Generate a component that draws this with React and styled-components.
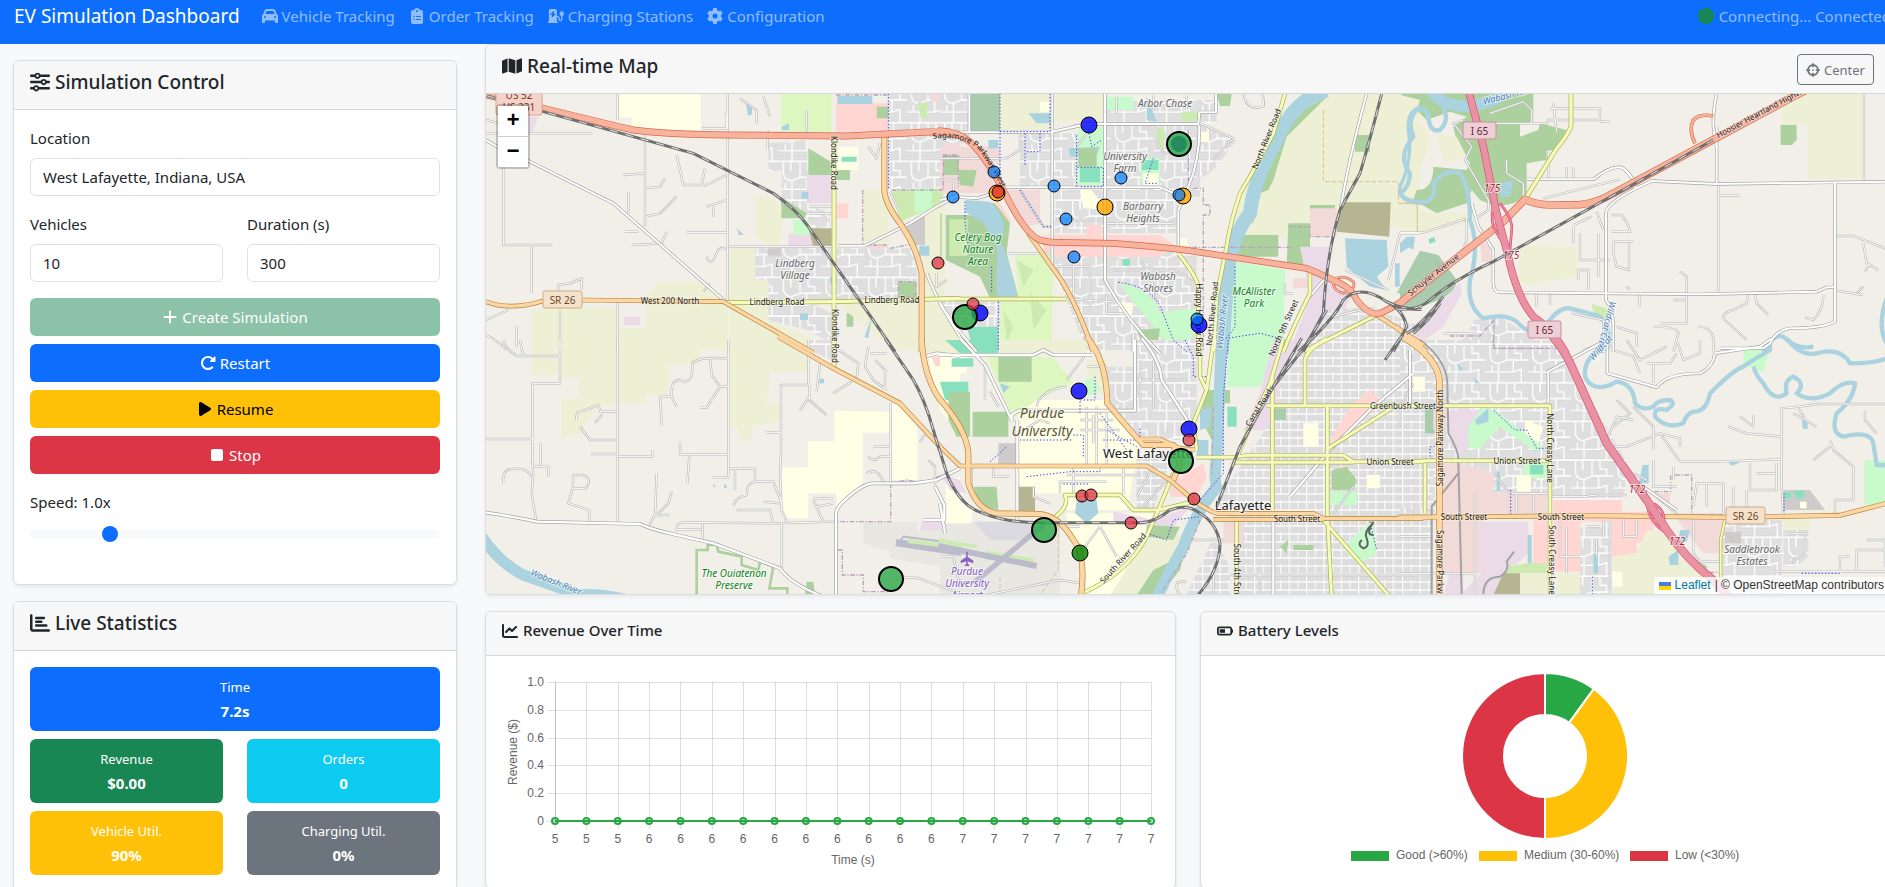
import React, { useState } from "react";
import styled, { createGlobalStyle, css } from "styled-components";
import {
  FaCar, FaClipboardList, FaChargingStation, FaGear, FaSliders, FaPlus, FaRotateRight,
  FaPlay, FaStop, FaChartBar, FaMap, FaCrosshairs, FaChartLine, FaBatteryHalf,
} from "react-icons/fa6";

const GlobalStyle = createGlobalStyle`
  *, *::before, *::after { box-sizing: border-box; }
  body {
    margin: 0;
    background: #f8f9fa;
    color: #212529;
    font-family: "Segoe UI", "Noto Sans", "Open Sans", sans-serif;
    font-size: 15px;
    line-height: 24px;
  }
`;

const Viewport = styled.div`
  height: 100vh;
  overflow: hidden;
`;

const Page = styled.div`
  width: calc(100% + 18px);
`;

const Navbar = styled.header`
  display: flex;
  align-items: flex-start;
  height: 44px;
  padding: 4px 12px 0 14px;
  background: #0d6efd;
  color: rgba(255, 255, 255, 0.55);
`;

const Brand = styled.a`
  margin-right: 22px;
  color: #fff;
  font-size: 19px;
  text-decoration: none;
`;

const Nav = styled.nav`
  display: flex;
  gap: 14px;
`;

const NavLink = styled.a`
  display: flex;
  align-items: center;
  gap: 4px;
  color: inherit;
  text-decoration: none;
  svg { font-size: 16px; }
`;

const Status = styled.div`
  display: flex;
  align-items: center;
  gap: 5px;
  margin-left: auto;
`;

const StatusDot = styled.span`
  width: 16px;
  height: 16px;
  border-radius: 50%;
  background: #198754;
`;

const Main = styled.main`
  display: grid;
  grid-template-columns: minmax(0, 24fr) minmax(0, 76fr);
  gap: 28px;
  padding: 0 12px 0 13px;
`;

const Sidebar = styled.div`
  display: flex;
  flex-direction: column;
  gap: 16px;
  padding-top: 16px;
`;

const Content = styled.div`
  display: flex;
  flex-direction: column;
  gap: 16px;
`;

const Card = styled.section`
  overflow: hidden;
  border: 1px solid #dcdddf;
  border-radius: 6px;
  background: #fff;
  box-shadow: 0 2px 4px rgba(0, 0, 0, 0.075);
`;

const CardHeader = styled.div`
  display: flex;
  justify-content: space-between;
  align-items: flex-start;
  padding: 9px 16px 7px;
  border-bottom: 1px solid #d6d7d8;
  background: #f7f7f7;
`;

const CardTitle = styled.h2`
  display: flex;
  align-items: center;
  gap: 5px;
  margin: 0 0 8px;
  font-weight: 500;
  font-size: ${(p) => (p.$small ? 15 : 19)}px;
  line-height: ${(p) => (p.$small ? 19 : 24)}px;
  svg { font-size: ${(p) => (p.$small ? 16 : 20)}px; }
`;

const CardBody = styled.div`
  padding: 16px;
`;

const ControlBody = styled(CardBody)`
  padding-bottom: 38px;
`;

const Columns = styled.div`
  display: grid;
  grid-template-columns: 1fr 1fr;
  gap: ${(p) => p.$rowGap || 0}px 24px;
`;

const Field = styled.div`
  display: flex;
  flex-direction: column;
  gap: 8px;
  margin-bottom: ${(p) => (p.$last ? 0 : 16)}px;
`;

const TextInput = styled.input`
  width: 100%;
  height: 38px;
  padding: 6px 12px;
  border: 1px solid #dee2e6;
  border-radius: 6px;
  background: #fff;
  color: inherit;
  font: inherit;
`;

const ButtonStack = styled.div`
  display: flex;
  flex-direction: column;
  gap: 8px;
  margin-bottom: 16px;
`;

const ActionButton = styled.button`
  display: flex;
  justify-content: center;
  align-items: center;
  gap: 4px;
  height: 38px;
  border: 0;
  border-radius: 6px;
  background: ${(p) => p.$bg};
  color: ${(p) => p.$fg || "#fff"};
  font: inherit;
  svg { font-size: 16px; }
  &:disabled { opacity: 0.5; }
`;

const thumb = css`
  width: 16px;
  height: 16px;
  border: 0;
  border-radius: 50%;
  background: #0d6efd;
`;

const Range = styled.input`
  width: 100%;
  height: 24px;
  margin: 0;
  background: transparent;
  appearance: none;
  &::-webkit-slider-runnable-track {
    height: 8px;
    border-radius: 8px;
    background: #f8f9fa;
  }
  &::-webkit-slider-thumb {
    ${thumb}
    margin-top: -4px;
    appearance: none;
  }
`;

const Tile = styled.div`
  grid-column: ${(p) => (p.$wide ? "1 / -1" : "auto")};
  padding: 8px;
  border-radius: 6px;
  background: ${(p) => p.$bg};
  color: #fff;
  text-align: center;
`;

const TileLabel = styled.div`
  font-size: 13px;
`;

const TileValue = styled.div`
  font-weight: 700;
`;

const CenterButton = styled.button`
  display: flex;
  align-items: center;
  gap: 4px;
  height: 31px;
  padding: 0 8px;
  border: 1px solid #6c757d;
  border-radius: 4px;
  background: transparent;
  color: #6c757d;
  font: inherit;
  font-size: 13px;
  svg { font-size: 14px; }
`;

const MapFrame = styled.div`
  position: relative;
  height: 500px;
  overflow: hidden;
  background: #f2efe9;
`;

const MapDrawing = styled.svg`
  display: block;
  width: 100%;
  height: 100%;
`;

const ZoomControl = styled.div`
  position: absolute;
  top: 10px;
  left: 10px;
  display: flex;
  flex-direction: column;
  border: 2px solid rgba(0, 0, 0, 0.2);
  border-radius: 4px;
  background-clip: padding-box;
`;

const ZoomButton = styled.button`
  width: 30px;
  height: 30px;
  padding: 2px 0 0;
  border: 0;
  background: #fff;
  color: #000;
  font: bold 22px/28px "Liberation Mono", monospace;
  & + & {
    height: 31px;
    border-top: 1px solid #ccc;
  }
`;

const Attribution = styled.div`
  position: absolute;
  right: 0;
  bottom: 0;
  display: flex;
  align-items: center;
  gap: 4px;
  padding: 0 6px 0 5px;
  background: rgba(255, 255, 255, 0.8);
  color: #333;
  font: 12px/17px "Liberation Sans", Arial, sans-serif;
  a { color: #0078a8; text-decoration: none; }
`;

const Charts = styled.div`
  display: grid;
  grid-template-columns: 1fr 1fr;
  gap: 24px;
`;

const ChartSvg = styled.svg`
  display: block;
  width: 100%;
  height: 200px;
  overflow: visible;
  font-family: "Liberation Sans", Arial, sans-serif;
  font-size: 12px;
  fill: #666;
`;

/* ---------- map data ---------- */

const C = {
  res: "#e0dfdf", farm: "#eef0d5", school: "#ffffe5", wood: "#add19e", grass: "#cdebb0",
  park: "#c8facc", golf: "#def6c0", comm: "#f2dad9", retail: "#ffd6d1", indus: "#ebdbe8",
  water: "#aad3df", pitch: "#88e0be", cem: "#aacbae", brown: "#b6b592", air: "#e9e7e2",
  apron: "#dadae0", gray: "#cdcccb", sub: "url(#suburb)", grid: "url(#blocks)",
};

const ROADS = {
  res: ["#bbbbbb", "#ffffff"],
  tert: ["#a5a5a5", "#ffffff"],
  sec: ["#a9b04c", "#f7fabf"],
  prim: ["#b98536", "#fcd6a4"],
  trunk: ["#d3694c", "#f9b29c"],
  motor: ["#dc4a79", "#e892a2"],
};

/* Each tile is drawn at three units per pixel from its own corner. */
const TILES = [
  {
    x: 480, y: 80,
    areas: [
      ["school", "M416,41H662V150H455V112H416Z M1070,200H1135V270H1070Z"],
      ["golf", "M903,41H1055V155H903Z"],
      ["retail", "M1068,70H1225V155H1068Z M1070,370h35v45h-35Z"],
      ["sub", "M865,190L980,180L985,280L975,370L1050,400V500L1000,440L905,350V270L865,275Z M825,500H1055V660H865V605H825Z M1225,41H1440V330H1225Z M1070,505H1310V660H1070Z M860,670L985,665L1055,700V790L985,750L860,720Z"],
      ["comm", "M1350,41H1440V90L1350,60Z M1160,480H1225V505H1160Z M1390,130H1440V330H1390Z"],
      ["wood", "M985,205L1060,250V285H985Z M903,350L980,400L975,415H903Z M618,697H665V747H618Z M1190,80H1225V115H1190Z M1255,605H1308V650H1255Z M1070,270h40v30h-40Z M1100,700h20v40h-20Z M1397,405H1440V540H1397Z M1390,225H1440V285H1390Z"],
      ["indus", "M980,285H1055V370H980Z M925,460L1000,460L1010,498H925Z M432,710H480V735H432Z M145,110L173,110L160,155H145Z"],
      ["park", "M940,420L985,420L1000,465H940Z"],
      ["brown", "M985,445H1055V500H1000Z"],
      ["farm", "M828,350L870,350L905,380L900,495H860L828,470Z M748,505H825V600H865V720L985,770V810H748Z M155,685H415V810H155Z M415,745H496V670L530,610L660,605L745,670V810H415Z M1148,330H1225V495H1148Z M1335,370L1395,350V650H1335Z M1070,670H1440V810H1240Z"],
      ["grass", "M1235,330L1390,325V370L1260,425Z M1312,68h30v45h-20Z"],
      ["park", "M1305,325H1355V395H1305Z"],
      ["gray", "M1335,400V495H1290L1270,450Z M863,505h40v22h-40Z"],
      ["pitch", "M1085,230h45v15h-45Z"],
      ["water", "M1072,48H1177V72H1072Z M798,70l18,8v25l-12,5Z M905,140l22,-10v20h-20Z M770,445l22,20h-15Z M965,335h20v22h-20Z M1175,715l-10,60l-12,-5Z M960,700h24v20h-24Z M1318,497h30v30h-30Z M1050,590h20v20h-20Z"],
    ],
    roads: [
      ["res", 6, "M413,41V120 M743,41V660 M495,165V440 M70,260V495H217 M155,497V640 M18,160H337 M240,690V810 M413,665V810 M748,500H1060 M430,285L490,280 M497,325L540,320 555,295 M497,410L540,400 590,350 M590,225L610,315H680L740,285 M665,315L675,265 M455,495L545,490 560,455 M620,457H740 M435,455H475 M445,335V400 M680,380L740,360 M700,380V410 M680,530Q690,560 705,530Q720,490 740,510 M235,630V615L270,610 305,595V630 M18,720L85,690 M18,765Q50,780 80,810 M110,740V800 M690,610L670,635 M665,145H740V100 M780,55L830,90V130 M850,50L870,110 M980,90V155 M1370,580V620L1400,600 M18,120L60,130 M863,150V210 M1230,335L1255,390 M1165,200L1190,235L1200,190 M990,380H1055 M990,400H1055"],
      ["tert", 9, "M18,180L60,205 150,245 400,370 740,668 M1075,497H1155L1290,430 1370,380 1440,345 M1340,580Q1370,660 1440,770"],
      ["sec", 13, "M740,668L1070,665L1440,655 M1062,165V815"],
      ["prim", 13, "M18,665Q90,692 180,665L310,660L730,665L1000,818"],
      ["prim", 17, "M1213,172V330Q1215,370 1260,430Q1310,500 1325,580V815"],
      ["trunk", 20, "M20,45L190,85Q350,125 460,150Q560,163 740,165L1100,168L1300,158Q1400,150 1450,170"],
    ],
    rail: ["M20,47L190,95L640,220L880,340Q950,390 985,440L1245,815"],
    dots: ["M1225,41V330"],
    bounds: ["M1068,45H1225 M1148,330V495H1225 M1235,330H1390V230H1440 M1255,605H1308V650H1255Z M1230,505L1310,490"],
  },
  {
    x: 940, y: 80,
    areas: [
      ["cem", "M92,41H180V155H92Z"],
      ["farm", "M180,41H330V150H180Z M345,41H490V125H345Z"],
      ["sub", "M0,41H90V190H0Z M240,160H410V320H240Z M500,130H780V350H500Z M345,330H710V460H345Z M340,500H770V810H440L340,560Z M780,130L890,180L830,260L780,300Z M495,60H830V130H495Z M0,655H180V740H80L0,680Z"],
      ["comm", "M0,200H90L180,290V340H0Z M200,330H300V430L260,440Z M110,200H180V260Z"],
      ["wood", "M10,225h45v60h-45Z M55,270L110,270 100,320 60,315Z M830,41H875L870,78H840Z"],
      ["retail", "M310,465H660L710,500L660,530H310Z M440,435h45v30h-45Z M165,345L215,425H180Z M400,130h25v12h-25Z"],
      ["park", "M420,140H490V315H412V160Z M500,50H580V90H500Z M600,235H660V315H605Z"],
      ["water", "M385,205L480,200 470,225 390,230Z M620,50L650,125 620,120Z M145,180h30v25h-30Z M265,100h65v30h-40Z"],
      ["wood", "M415,205H470V260H415Z"],
      ["pitch", "M420,262h60v45h-60Z M605,240h50v30h-50Z M548,537h22v20h-22Z"],
      ["grass", "M650,140L675,150 670,210 650,200Z M725,95h50v30h-50Z"],
      ["school", "M780,155h27v30h-27Z M420,330L455,330 500,390 430,385Z M535,665L580,670 575,705 540,705Z M610,280h45v35h-45Z M300,65h30v30h-30Z M720,475h22v25h-22Z"],
      ["farm", "M1040,80L1170,41H1440V440H1110V470H1020L870,480L900,350L1020,180Z"],
      ["wood", "M1070,100L1160,50L1170,41L1040,170L1000,300L985,330L960,340L940,430L920,420L960,280Z M895,465H1015V530H885Z M1045,430H1110V555H1040Z M1110,375H1185V400L1110,430Z M1245,165h45v50h-45Z"],
      ["comm", "M1110,385H1190V470H1110Z M1060,595h45v30h-45Z"],
      ["indus", "M1080,500H1170L1160,600L1240,640L1150,810H1050L1110,650Z"],
      ["brown", "M1200,367H1352L1348,470L1190,455Z"],
      ["water", "M1215,475L1340,480 1345,560 1310,590 1340,630 1290,620 1220,560Z M1365,550h14v70h-14Z M1390,490l35,-20l-5,40Z"],
      ["park", "M885,545L1035,570L1030,810H860Z"],
      ["grid", "M1170,690L1300,680 1440,740V810H1100Z"],
      ["cem", "M1440,520L1370,640L1440,640Z"],
      ["wood", "M18,405H95V365L165,370L210,430L200,520L235,650L150,655L120,590L18,540Z M1,400h4v145h-4Z"],
      ["grass", "M28,418h55v110h-55Z"],
      ["water", "M78,360L150,365L165,380Q210,440 180,480Q215,560 232,650H170L172,500L130,430L75,395Z"],
      ["golf", "M225,525H340L335,810H180V655L235,650Z"],
      ["grass", "M230,540l50,30l-30,50Z M270,640l50,50l-40,60Z M190,690l30,50l-20,50Z"],
      ["school", "M380,625h20v22h-20Z"],
      ["pitch", "M80,740H175V810H100Z"],
      ["park", "M535,605Q640,630 660,700Q740,680 780,690L750,790L770,810H700Q620,720 535,605"],
      ["wood", "M590,750L660,745 650,810 610,800Z"],
      ["farm", "M0,700L80,810H0Z"],
    ],
    river: [[42, "M1160,30Q1060,60 1010,180Q940,300 930,400Q880,460 865,560L845,820"], [10, "M1445,80Q1400,90 1405,150Q1420,240 1380,320Q1375,370 1445,370"]],
    roads: [
      ["res", 6, "M0,235H200L240,210 M240,210V160 M0,300L40,300V350 M650,180Q680,260 700,180 M780,130L880,175 820,240 M910,41Q920,95 970,80Q975,60 965,41 M400,658L520,665 M520,570H700L760,600 M600,540Q650,600 640,660 M350,560H450V700 M500,640V700H560 M400,650V560 M1345,600L1380,460H1440 M1180,710L1260,690 M200,520H330 M240,330L310,440H337 M350,420H495 M500,430H700 M440,160L410,200 M1215,570L1345,630 M530,50V100 M640,45V90 M740,45V90 M1035,610V640H1060"],
      ["tert", 9, "M0,157H330L440,132H775L778,97H828V41 M190,322H660L715,345 M715,520V390L745,320Q780,240 778,135 M337,41V560 M495,41V600Q560,720 660,820 M88,41V155 M0,360L40,350L110,355L160,340 M0,673Q60,760 110,815 M1280,41Q1220,260 1200,400 M580,760V815 M1160,590L1100,660"],
      ["sec", 12, "M1035,41L1000,160Q960,240 900,340Q870,430 860,500L830,650L822,815 M715,520Q770,590 775,620V815 M0,657H380 M1110,570V640Q1060,740 1030,815 M1310,705L1090,815"],
      ["prim", 14, "M265,460L335,560Q400,640 460,815 M1310,705L1450,795"],
      ["trunk", 19, "M-5,152Q60,155 100,195Q150,250 200,350Q250,450 290,475Q310,487 350,487L520,490L640,500L720,508L1100,565Q1160,590 1200,610Q1235,625 1250,660Q1290,710 1320,700Q1370,680 1450,618"],
      ["trunk", 7, "M1180,600Q1210,580 1240,605Q1250,630 1210,640Q1175,630 1180,600"],
    ],
    rail: ["M1325,41Q1290,180 1260,280L1200,390Q1160,520 1150,700L1090,815", "M1075,815Q1180,720 1210,660Q1260,610 1340,665Q1390,690 1400,740L1360,815", "M1340,665Q1390,690 1445,688", "M1160,690L1085,815"],
    dots: ["M180,41V340 M180,155H330V41 M255,160V260 M300,160V215H255 M410,320V160 M412,262H490V320H415 M445,150L455,200 485,180", "M535,607Q640,620 665,690L700,780L740,815 M175,655V815 M155,560V640 M885,560V740L860,775L960,760L1020,775 M75,365V430L85,500 M240,330L310,440H337 M275,655H380 M640,235L615,310H655"],
    bounds: ["M745,150V330 M760,325H790V375H810V405H790V815 M8,225H55V320 M1045,440H1110V470H1180 M730,502H1060"],
    admin: ["M1150,90V305H1375V370H1432V460"],
  },
  {
    x: 1400, y: 80,
    areas: [
      ["wood", "M0,41H400V130H360V170L415,150L420,130L500,150L470,210L440,212V240L380,250V350L340,370L290,380L240,360L215,330L200,370L110,400L40,360L50,330Q100,330 100,260L200,270L210,250Q170,200 160,140L200,110L150,95L80,120Z"],
      ["farm", "M0,45L60,60L30,160L20,270L40,320L0,350Z M0,370L100,400L200,400V430L80,460H0Z M110,160L170,170 200,230 130,245Z M50,130L90,150 80,220 40,300 35,200Z"],
      ["water", "M300,310L340,300 330,350 300,350Z M20,470H45L30,500L0,520V490Z"],
      ["cem", "M60,512L115,525L170,600Q170,650 60,680L0,690V620Z"],
      ["comm", "M240,480L270,500 275,550 245,545Z"],
      ["indus", "M180,605L185,640 130,740 60,790 20,760L150,640Z"],
      ["farm", "M355,495L530,500V590L460,600 380,615 355,600Z M1145,41H1390V295H1225V135H1145Z"],
      ["wood", "M1142,135h48v45l-15,15h-33Z"],
      ["sub", "M220,720L300,712L380,760L460,815H130L200,770Z"],
      ["grass", "M575,672L635,690 625,720 580,700Z"],
      ["pitch", "M85,478l18,-8l4,15l-18,6Z"],
    ],
    river: [[34, "M95,35Q130,80 200,78T330,30"], [13, "M130,85Q150,120 120,150Q90,160 85,110Q80,80 50,90Q20,120 40,170Q-10,230 30,280Q30,320 0,340Q20,370 80,365Q110,350 100,310Q140,260 180,280Q210,320 210,420Q240,500 210,600Q200,680 250,715Q320,700 350,725Q390,770 430,750Q470,680 510,685Q570,700 600,710Q640,750 620,815 M1460,655Q1430,740 1460,790 M1090,815Q1120,760 1150,770Q1190,810 1240,800"]],
    roads: [
      ["res", 6, "M955,305V635 M955,347H1018 M1392,41V300 M1310,468H1360L1455,505 M1390,490L1400,550 1435,570 M0,458H70L200,415 M200,130H440L445,120H600V85H450 M600,125H630 M460,70L470,155 M320,240V280L370,310V360 M445,215V300 M500,262V298 M520,262V298 M430,355L660,298 M635,455H690Q690,440 665,405H635 M640,485H700 M687,490V570L650,560L640,520V485 M520,435L575,410 M540,460V540H630 M520,490V440 M590,395L610,450 M595,460V590 M530,570H565V630 M535,600V570 M840,575L860,590V640 M860,645V730H780 M820,660H858 M410,640V680 M450,640V675 M718,645V680 M975,720Q960,700 1000,690L1040,670L1045,640 M1065,640L1070,670 1105,705 M975,720L1040,780 M1270,645Q1270,690 1240,720L1215,712 M1310,632L1390,645 M1370,640L1390,620 M895,740Q950,740 940,815 M650,740L710,760V800 M760,740Q830,740 835,760L820,815 M550,810L610,790 610,720 515,700 M200,415V480L185,520 M130,760H230 M190,120L160,130L215,200 195,240L265,360V390L235,410 M270,100L370,65L395,90V130 M1410,550L1395,575 M680,620L690,630"],
      ["tert", 9, "M380,298H580Q640,250 670,265Q700,290 708,325 M950,41Q930,130 950,200V310 M1455,305L950,312L755,303L708,325Q620,370 618,400V660Q640,690 640,740V815 M215,370L235,440L280,510V610Q280,637 300,637L900,643L1250,635L1280,622H1305 M1305,305V725Q1270,745 1170,745Q1130,750 1110,790L1090,805H960"],
      ["prim", 14, "M-10,742L80,815"],
      ["sec", 13, "M513,41V140Q500,170 470,205L380,350"],
      ["trunk", 10, "M885,190Q865,150 880,120Q900,100 940,108"],
      ["trunk", 22, "M-10,678L60,620L310,425L375,358Q400,372 450,375L540,374Q590,370 640,340L1180,50L1220,30"],
      ["motor", 7, "M285,360Q270,400 280,440L320,510 M300,370Q340,420 335,450L330,510"],
      ["motor", 22, "M206,35L250,200L290,400L325,530Q350,650 400,710Q460,750 498,820"],
      ["tert", 9, "M950,140V200 M670,265Q700,290 708,325"],
    ],
    rail: ["M-5,688Q60,690 90,660Q160,600 280,545L940,180", "M20,760Q60,740 130,650", "M40,760Q90,720 120,670"],
    bounds: ["M150,768H240L282,720V805H470"],
    admin: ["M0,370H52V460"],
  },
  {
    x: 480, y: 340,
    areas: [
      ["farm", "M245,0H410V190L350,200L300,280L245,290V175H298V115H245Z M155,10L235,40V105H157Z M415,0H660V75H565V165H495V190H415Z M748,0H900L985,60V95H870V150H860V190H900V245L815,260V300H785L770,260H748Z M1260,0H1440V40L1320,45Z"],
      ["school", "M1063,212L1228,215V278H1148V430L1070,500V460H985V535H907V382H983V304H1063Z M1235,190L1270,200 1312,260V420H1235Z M1345,55H1440V290L1380,210Z M1397,430L1440,410V590H1397Z"],
      ["pitch", "M1393,128h47v27h-47Z M1415,55h25v22h-25Z"],
      ["wood", "M1405,157h35v95Z M980,725h20l5,40h-30Z"],
      ["retail", "M1355,50h30v28h-20Z"],
      ["indus", "M1325,545H1395V570H1320Z M1425,420h15v50Z"],
      ["sub", "M985,0H1055V60L985,30Z"],
      ["air", "M1150,545H1312V570H1440V690L1350,675L1230,655V635L1150,610Z"],
      ["water", "M1020,115l12,3v12h-15Z M700,430l8,10h-8Z M732,434h8v10h-8Z"],
    ],
    river: [[34, "M5,590Q60,670 130,705L300,765Q360,760 440,780"]],
    runway: [["#bbbbcc", 22, "M1248,608L1445,637"], ["#bbbbcc", 6, "M1262,600L1270,590L1445,612"], ["#cdebb0", 12, "M1284,603L1445,623"]],
    roads: [
      ["res", 6, "M240,0V130H157V370L160,400L155,460L168,540 M18,297H157 M70,0Q80,30 110,48H240 M130,48L120,0 M413,0V550 M545,257L540,170H575L590,200 M575,170Q570,120 600,120Q640,140 637,70Q650,50 745,55 M745,0V412H697 M660,203H680L720,140H745 M720,140L695,105 690,60 M290,240Q285,210 310,212L355,195 365,225 345,248 M360,215H412 M300,260L330,300H412 M333,342H412 M415,350H517V330 M600,305V343H745 M628,345L622,430 M745,386H825V425 M765,388V450 M70,430Q65,390 95,387Q140,380 155,410 M182,308V380 M160,380H205V410 M280,405H310Q340,420 315,445H278Z M278,445L265,490 328,510V545 M530,400L525,525L508,555 M525,525H570 M575,455L565,490L530,525 M590,575V565Q590,547 610,547L700,548L880,550L1065,545 M668,550V600 M590,568H665 M905,550V685 M985,0V135H903V340L900,400L905,510L920,545 M988,170L960,212 M988,135V180L1040,225 M1010,155L1020,70 M760,497Q770,470 800,465Q800,430 825,425H880L905,490 M770,510H870L880,550 M850,485L900,490 M857,278H903 M1232,190V430 M1180,320H1230 M1165,350Q1180,370 1200,350H1230 M1160,400Q1190,380 1210,425 M1000,480L1030,545 M1000,475H1060 M1010,500L1060,490 M1270,713H1310L1440,760 M1345,360L1365,380V440 M1320,305L1345,270 M1060,160L1130,115L1135,70 1075,30 M1165,20L1155,80 1180,120 1220,150 M1220,40H1170 M1215,90V150 M1185,60L1220,95"],
      ["tert", 10, "M18,518Q100,530 170,545L480,552Q520,570 590,585L700,610L900,685Q930,730 1030,770 M1068,770V520Q1070,500 1100,475Q1150,430 1180,430H1300L1370,420L1440,385 M1330,540H1393V495L1365,440 M1340,48L1370,40L1440,48"],
      ["sec", 13, "M1062,-5V80"],
      ["prim", 14, "M895,-10L1060,85L1260,190L1385,325"],
      ["prim", 17, "M1325,-5Q1330,110 1382,182"],
    ],
    rail: ["M1215,-5L1300,120Q1335,180 1360,270L1378,330"],
    preserve: "M650,770V630H683V615H710L715,635L785,650V675L835,690L840,665L880,680L868,745H922V770",
    bounds: ["M1232,430V545H1068 M1070,550V630H1087V705H1150V755H1230 M1232,430L1280,420 1330,428 1400,400"],
  },
  {
    x: 940, y: 340,
    areas: [
      ["farm", "M180,0H440V40H180Z M440,60h60v100h-60Z"],
      ["school", "M235,180H500V200L600,300L560,510H380V460H235Z M380,520H640L520,765H440L430,620L380,560Z M20,490H95V598H20Z M545,95h32v50h-32Z M0,50H80V100H0Z"],
      ["pitch", "M0,125H85V180H15Z M15,0H175V40H60Z M35,55h65v25h-65Z M548,125h26v18h-26Z"],
      ["golf", "M140,50H340L400,130L290,180L220,235Z"],
      ["wood", "M25,155H90V290H50L25,240Z M98,215H205V290H98Z M175,50H275V125H175Z M100,440L170,440 175,510 120,500Z M800,150L830,150L815,300L780,230Z"],
      ["park", "M430,130Q460,90 480,150L465,165H440Z M675,0H770V110Z M865,0H1030L960,140H860Z"],
      ["sub", "M585,0H770V300H600L500,190V80H585Z"],
      ["gray", "M175,310H230V375H175Z M1240,370h60v50h-60Z"],
      ["indus", "M1000,0H1080L990,270H910L960,160Z M520,515L600,530 640,540 750,500L700,560 520,550Z M0,400L60,420 80,460 30,450Z"],
      ["retail", "M690,430L790,370 800,410 770,470 690,470Z"],
      ["farm", "M510,765L620,600L740,580L720,640L640,765Z"],
      ["wood", "M590,765L640,690L700,660L740,610L720,690L660,765Z M620,555L720,560L700,600 620,590Z M840,150h30v40h-30Z"],
      ["pitch", "M862,200h28v60h-28Z"],
      ["grid", "M1080,0H1440V765H880V560L830,480L900,380L990,250L1020,130Z M740,765L820,590L870,680V765Z M590,340H700L640,510H590Z"],
      ["comm", "M850,540H910V610H850Z"],
      ["retail", "M1230,200L1290,150L1330,190L1190,300L1165,310Z"],
      ["wood", "M1175,390L1220,380 1250,420 1240,450H1175Z M1020,620l25,-20l-5,40Z M1060,615h60v15h-60Z"],
      ["park", "M1170,455H1250V495H1170Z M1230,600L1300,540L1310,640L1260,670L1220,640Z"],
      ["school", "M1090,250h45v70h-45Z M1280,405h40v40h-40Z M1385,405h40v40h-40Z"],
      ["cem", "M1000,205h38v35h-38Z"],
      ["air", "M0,550H360V765H0Z"],
      ["apron", "M100,545H290V600H150Z"],
      ["water", "M410,480H470L475,520 440,550 405,520Z M180,130L210,140 190,160Z M780,210L815,200 810,260 780,270Z M770,300h35v45h-35Z"],
      ["brown", "M235,440H285V520H235Z"],
    ],
    river: [[34, "M845,-5L830,350Q820,430 830,440Q760,530 730,620Q690,690 650,775"]],
    runway: [["#cdebb0", 26, "M140,645L280,668"], ["#bbbbcc", 18, "M-5,618L290,678"], ["#bbbbcc", 16, "M100,730L315,550"], ["#cdebb0", 10, "M-5,600L110,620"]],
    roads: [
      ["res", 6, "M440,200V380 M470,200V375 M500,220V375 M420,240H520 M420,270H540 M235,280L300,240 330,250 M290,200Q300,150 380,140 M360,460V425H500 M400,380V460 M380,405H600 M550,380V465 M280,440V470L330,490 M95,385V450 M160,380V410H210 M360,560H420 M480,560L420,640 M480,560L530,650 M0,650H40L60,740 M140,765L360,720L425,730 M700,400L600,510 M640,380L590,470 M500,80H440 M440,40L380,120 M460,225V310 M135,75V180 M150,155L175,200 M720,765Q690,720 740,725 M850,600L760,600 M820,765V700 M870,705H1440 M1000,560V765 M960,700V765 M1240,440L1180,520 M580,120H740 M600,60V200 M640,60V200 M1420,130L1380,200V260"],
      ["tert", 10, "M60,-5L135,75L215,240 M215,245V225L235,212H585V0 M-5,45H280L310,30L340,45H455 M605,-5Q660,60 665,120L745,245 M232,240V540 M0,490L15,580 M1420,100L1300,200L1170,330L1050,470 M1000,545V765 M425,765V660"],
      ["sec", 12, "M780,-5V110L800,150L760,250L770,330 M822,-5L800,150 M770,352H880L920,346H1210L1240,365H1450 M880,367H1240 M980,197H1450 M1030,-5L990,130L930,260L880,375 M997,100V510 M1095,195V60Q1100,30 1160,-5 M1162,200V520L1175,775 M1165,325L1370,195 M1145,535L1350,770 M890,540V770 M700,400L655,510H580L540,465H375Q390,500 340,535 M430,758Q560,700 620,590L655,510L760,485"],
      ["prim", 13, "M-4,316L60,378H620L690,420L760,480Q800,510 830,520H1120L1150,535H1450 M820,538H1150 M600,297H660L720,325L765,330"],
      ["prim", 17, "M440,-10Q500,60 502,190Q560,260 610,315H700L720,370 700,420"],
      ["prim", 17, "M-3,175Q80,270 85,340V430Q110,510 170,520L300,522Q360,530 400,600Q440,650 422,775"],
    ],
    rail: ["M-3,325L20,400Q60,500 130,520Q200,548 300,548H600Q640,550 690,510Q740,490 780,520Q830,550 840,610Q840,690 770,770", "M1115,-5L1000,140L900,320L830,500", "M1085,-5L1000,140", "M1380,-5L1335,60"],
    loop: "M1300,545Q1275,585 1300,585M1300,550Q1270,575 1280,595Q1290,620 1270,625Q1250,615 1265,600",
    dots: ["M240,300H400 M400,285H430V350 M480,220L560,330 M490,300H600V260 M500,270L590,320 M150,365L200,320 M260,410L390,395H480V380 M370,432H450 M735,0L760,50V110H800 M865,0L850,170V400L770,490 M1290,545L1310,630 M620,580L680,600 700,540L780,530 M465,110V180H420V225"],
    bounds: ["M820,200L815,400 M780,540L740,640 660,765"],
    admin: ["M355,560V690L300,765 M180,712V765"],
  },
  {
    x: 1400, y: 340,
    areas: [
      ["sub", "M0,0H450L500,60L700,400L660,480H440V520H0Z"],
      ["grid", "M0,120H100V500H0Z M0,540H100V765H0Z"],
      ["indus", "M150,210H245L205,290 210,325L175,340L145,280Z"],
      ["park", "M245,205L285,210L440,330H400L300,260L240,325H205V260Z M370,365H440V415H370Z M1393,360H1455V495H1393Z M1030,30H1110L1090,95L1030,75Z"],
      ["water", "M225,240L265,205V245L230,255Z M728,375h18v55h-30Z M290,395h10v60h-10Z M985,365h40l-30,12Z"],
      ["school", "M375,240L430,260 415,310 375,280Z M350,405h42v50h-42Z M40,110h35v45h-35Z"],
      ["pitch", "M390,375h40v28h-40Z"],
      ["cem", "M75,205h30v75h-30Z"],
      ["comm", "M95,370H175L280,400V460H440V520H130V400Z M130,540H250V700H130Z M750,460H810V520H970V640H910L800,500Z M100,210h40v60h-40Z"],
      ["retail", "M460,480H665V515H760V600L710,610V640L635,650V545H540V695H460Z M400,540h50v140h-50Z"],
      ["indus", "M245,545H385V640L320,700L280,765H180L245,700Z M150,700H190V765H130Z"],
      ["grass", "M320,680L380,670H440V700H320Z M558,595h22v35h-22Z"],
      ["farm", "M360,700H440V765H360Z M470,700H600V765H470Z M740,570L800,580L860,640L930,720V765H640V650L710,640Z M1150,535h80v35h-80Z"],
      ["brown", "M310,700H360V765H280Z"],
      ["school", "M637,695h30v45h-30Z"],
      ["sub", "M965,540H1145V765H965Z M1150,570H1225V650L1190,680H1150Z M540,560H635V765H540Z"],
      ["gray", "M1150,450H1230L1275,510H1150Z M975,575h48v35h-48Z"],
      ["pitch", "M1153,457h20v18h-20Z M1180,452l32,0v20l-20,5Z"],
      ["school", "M1200,485h20v20h-20Z"],
      ["water", "M383,585h12v85h-12Z M580,640h14v60h-14Z M840,570h30l-10,35h-25Z M805,650l30,-20v45h-25Z M1205,240l18,5v22h-14Z M170,70l20,15l-10,8Z M220,110l20,20h-14Z"],
      ["wood", "M885,660l35,18v18h-30Z"],
    ],
    river: [[13, "M620,-30L590,30Q540,80 560,120Q590,160 650,125Q700,130 705,190Q730,215 760,200Q770,180 810,180Q830,190 800,210Q760,200 765,230Q800,270 850,250Q860,220 880,215Q920,215 930,160Q1000,90 1030,80L1060,60L1110,30V0 M1060,80Q1070,110 1090,130Q1120,190 1160,160Q1150,120 1180,110Q1220,130 1190,160Q1230,190 1290,160Q1330,120 1365,130Q1360,180 1310,220Q1290,280 1330,290Q1410,270 1420,310L1430,375H1455 M1160,-5Q1200,50 1250,40Q1320,20 1350,70Q1420,70 1460,55"]],
    roads: [
      ["res", 6, "M1145,440V205L1200,200L1250,192H1455 M985,260L1040,280L1145,290 M1020,230L1060,260V225 M840,365H950L1145,358 M840,365L780,280 M630,320H680L780,280 840,295V320 M1120,695H1455 M1305,525V480H1360V380L1300,330 1290,300 M970,525V430H890L880,500 M920,430V500 M880,540V640L900,665H960 M640,30L700,50 720,100 M680,0L720,60 800,20 M740,70H810L830,40 M830,0L850,60 900,40V0 M760,130V70 M650,180L690,220 640,260 M620,300L650,230 700,240 M700,200L760,260V330 M1050,370V450H1130V370 M1070,400H1130 M1000,440V525 M1040,450V525 M1145,440L1150,525 M700,400L740,420 M760,360V440H830 M770,470L840,530 M820,380V420 M1180,220L1250,260 M1195,205L1215,235 M1240,360L1290,320 M1320,700V650H1350 M1370,690V630H1455 M1400,600H1455V680 M670,530V590H710V540 M590,600V650 M500,560V700 M480,540V650H540 M330,460V530 M280,400L330,460H450 M450,470H550L590,465H680 M630,540V765 M350,460V520 M400,460V520 M1395,210V240L1430,280 M225,460V765 M100,700H225 M0,700H100 M0,590H90 M1165,580H1215V640L1170,670 M610,590V540 M560,560H600"],
      ["tert", 9, "M440,97L600,10 M622,-5V100L770,142Q800,100 900,100Q940,80 945,40L1080,20L1115,-5 M445,95V190 M30,30V200 M715,430L830,510"],
      ["sec", 12, "M75,370V520 M-5,367L75,362H440 M130,197H450V770"],
      ["sec", 9, "M975,540L962,600V770"],
      ["prim", 19, "M10,-8Q110,50 118,120V770"],
      ["prim", 14, "M-5,532L590,527L980,532L1320,526L1460,490"],
      ["motor", 7, "M740,490Q750,560 820,590 M760,490Q800,510 790,560"],
      ["motor", 24, "M455,-15Q500,40 520,90L620,310L740,480L800,570Q860,660 940,720L985,770"],
    ],
    thinrail: ["M60,0Q140,60 142,130L145,280Q175,330 175,360L185,765", "M175,400L95,500V765", "M250,765Q250,710 300,710Q330,690 320,665L342,635"],
    dots: ["M282,212L345,270H380L410,325H440 M90,350V320H105 M332,450V530 M577,710V765 M1205,700H1320 M1152,460V520"],
    bounds: ["M280,-5V25H450 M735,455H812V405H875V525H970 M900,697H960"],
  },
];

/* [x, y, lines, size, kind, rotation] */
const LABELS = [
  [795, 267, ["Lindberg", "Village"], 10, "area"],
  [1165, 107, ["Arbor Chase"], 10, "area"],
  [1125, 160, ["University", "Farm"], 10, "area"],
  [1143, 210, ["Barbarry", "Heights"], 10, "area"],
  [1158, 280, ["Wabash", "Shores"], 10, "area"],
  [1752, 553, ["Saddlebrook", "Estates"], 10, "area"],
  [978, 241, ["Celery Bog", "Nature", "Area"], 10, "nature"],
  [1254, 295, ["McAllister", "Park"], 10, "nature"],
  [734, 577, ["The Ouiatenon", "Preserve"], 10, "nature"],
  [967, 575, ["Purdue", "University", "Airport"], 10, "airport"],
  [1042, 418, ["Purdue", "University"], 14, "campus"],
  [1148, 458, ["West Lafayette"], 13, "town"],
  [1243, 510, ["Lafayette"], 13, "town"],
  [670, 304, ["West 200 North"], 8, "road"],
  [777, 305, ["Lindberg Road"], 8, "road"],
  [892, 303, ["Lindberg Road"], 8, "road"],
  [831, 163, ["Klondike Road"], 8, "road", 90],
  [832, 336, ["Klondike Road"], 8, "road", 90],
  [1269, 140, ["North River Road"], 8, "road", -68],
  [1215, 314, ["North River Road"], 8, "road", -84],
  [1196, 320, ["Happy Hollow Road"], 8, "road", 90],
  [1225, 322, ["Wabash River"], 9, "water", -84],
  [1286, 329, ["North 9th Street"], 8, "road", -66],
  [1261, 409, ["Canal Road"], 8, "road", -58],
  [1435, 277, ["Schuyler Avenue"], 8, "road", -38],
  [1764, 114, ["Hoosier Heartland Highway"], 8, "road", -28],
  [1403, 409, ["Greenbush Street"], 8, "road"],
  [1390, 465, ["Union Street"], 8, "road"],
  [1517, 464, ["Union Street"], 8, "road"],
  [1297, 522, ["South Street"], 8, "road"],
  [1464, 520, ["South Street"], 8, "road"],
  [1561, 520, ["South Street"], 8, "road"],
  [1443, 438, ["Sagamore Parkway North"], 8, "road", -90],
  [1437, 566, ["Sagamore Parkway"], 8, "road", 90],
  [1547, 448, ["North Creasy Lane"], 8, "road", 90],
  [1549, 560, ["South Creasy Lane"], 8, "road", 90],
  [1234, 574, ["South 4th Street"], 8, "road", 90],
  [1125, 560, ["South River Road"], 8, "road", -48],
  [555, 585, ["Wabash River"], 9, "water", 22],
  [1510, 98, ["Wabash River"], 9, "water", -14],
  [1603, 327, ["Wildcat Creek"], 9, "water", 105],
  [1603, 350, ["Wildcat"], 9, "water", -48],
  [1492, 192, ["175"], 10, "exit"],
  [1511, 259, ["175"], 10, "exit"],
  [1637, 493, ["172"], 10, "exit"],
  [1677, 545, ["172"], 10, "exit"],
];

const LABEL_STYLE = {
  area: { fill: "#666", fontStyle: "italic" },
  nature: { fill: "#0c8416", fontStyle: "italic" },
  airport: { fill: "#7f5bc4", fontStyle: "italic" },
  campus: { fill: "#5d5630", fontStyle: "italic" },
  town: { fill: "#222" },
  road: { fill: "#222" },
  water: { fill: "#4d80b3", fontStyle: "italic" },
  exit: { fill: "#a8283c", fontStyle: "italic" },
};

const SHIELDS = [
  { x: 543, y: 291, w: 39, h: 17, text: ["SR 26"], bg: "#f5e2cc", line: "#ccab85", ink: "#6b4a27" },
  { x: 1726, y: 507, w: 39, h: 17, text: ["SR 26"], bg: "#f5e2cc", line: "#ccab85", ink: "#6b4a27" },
  { x: 1463, y: 122, w: 33, h: 17, text: ["I 65"], bg: "#edd0d6", line: "#c98f9f", ink: "#6b1b36" },
  { x: 1528, y: 321, w: 33, h: 17, text: ["I 65"], bg: "#edd0d6", line: "#c98f9f", ink: "#6b1b36" },
  { x: 496, y: 86, w: 46, h: 29, text: ["US 52", "US 231"], bg: "#f5d3cb", line: "#dda08f", ink: "#7a3524" },
];

const MARKERS = [
  ["blue", 1089, 125], ["station", 1179, 144], ["served", 1179, 144],
  ["order", 994, 172], ["order", 953, 197], ["order", 1054, 186], ["order", 1121, 178],
  ["order", 1066, 219], ["order", 1074, 257], ["orange", 1183, 196], ["order", 1179, 195],
  ["orange", 1105, 207], ["orange", 997, 193], ["hot", 998, 192],
  ["blue", 1199, 325], ["order", 1197, 319], ["blue", 980, 313], ["station", 965, 317],
  ["drop", 973, 304], ["drop", 938, 263], ["station", 891, 579], ["blue", 1079, 391],
  ["blue", 1189, 429], ["drop", 1189, 440], ["station", 1181, 461], ["drop", 1082, 496],
  ["drop", 1091, 495], ["drop", 1194, 499], ["drop", 1131, 523], ["station", 1044, 530],
  ["idle", 1080, 553],
];

const MARKER_STYLE = {
  blue: { r: 8, fill: "#0000ff", o: 0.8, w: 1 },
  orange: { r: 8, fill: "#ffa500", o: 0.8, w: 1 },
  idle: { r: 8, fill: "#008000", o: 0.8, w: 1 },
  station: { r: 12, fill: "#28a745", o: 0.8, w: 2 },
  served: { r: 8, fill: "#127a5c", o: 0.7, w: 0 },
  order: { r: 6, fill: "#007bff", o: 0.7, w: 1 },
  drop: { r: 6, fill: "#dc3545", o: 0.75, w: 1 },
  hot: { r: 6, fill: "#e5402c", o: 0.9, w: 1 },
};

function TileLayer({ children }) {
  return TILES.map((t, i) => (
    <g key={i} transform={`translate(${t.x} ${t.y}) scale(${1 / 3})`}>{children(t)}</g>
  ));
}

function Roads({ kind }) {
  return (
    <>
      {[0, 1].map((pass) => (
        <TileLayer key={pass}>
          {(t) => t.roads.filter((r) => r[0] === kind).map(([k, w, d], i) => (
            <path key={i} d={d} fill="none" stroke={ROADS[k][pass]} strokeWidth={pass ? w - 3 : w + 1}
              strokeLinejoin="round" strokeLinecap="butt" />
          ))}
        </TileLayer>
      ))}
    </>
  );
}

function MapLabel({ label: [x, y, lines, size, kind, angle = 0] }) {
  const step = size === 14 ? 18 : 12;
  return (
    <text x={x} textAnchor="middle" fontSize={size} stroke="#fff" strokeOpacity={kind === "road" ? 0.35 : 0.6}
      strokeWidth="2" paintOrder="stroke" transform={angle ? `rotate(${angle} ${x} ${y})` : undefined}
      {...LABEL_STYLE[kind]}>
      {lines.map((line, i) => (
        <tspan key={line} x={x} y={y + i * step}>{line}</tspan>
      ))}
    </text>
  );
}

const BLOCK_STREETS = "M0,6H52M0,30H52M8,0V48M34,0V30";
const SUBURB_STREETS = "M0,12H64V60H128M64,12H128M14,12V48Q16,70 40,70V116M40,70L64,60M36,12V42M88,12V40H108V60M84,60V96H0M84,96L108,88V116M40,0V12M108,0V12M20,96V76";

function CityMap() {
  return (
    <MapDrawing viewBox="486 94 1404 500" preserveAspectRatio="xMidYMid slice" role="img"
      aria-label="Map of Lafayette" fontFamily="Noto Sans, sans-serif">
      <defs>
        <pattern id="blocks" width="52" height="48" patternUnits="userSpaceOnUse">
          <rect width="52" height="48" fill="#dddddd" />
          <path d={BLOCK_STREETS} stroke="#cccccc" strokeWidth="6" />
          <path d={BLOCK_STREETS} stroke="#fff" strokeWidth="4" />
        </pattern>
        <pattern id="suburb" width="128" height="116" patternUnits="userSpaceOnUse">
          <rect width="128" height="116" fill="#e0dfdf" />
          <g fill="none" strokeLinejoin="round">
            <path d={SUBURB_STREETS} stroke="#d2d2d2" strokeWidth="7" />
            <path d={SUBURB_STREETS} stroke="#fff" strokeWidth="5" />
          </g>
        </pattern>
      </defs>

      <TileLayer>{(t) => t.areas.map(([k, d], i) => <path key={i} d={d} fill={C[k]} />)}</TileLayer>
      <TileLayer>
        {(t) => (
          <g fill="none">
            {(t.river || []).map(([w, d]) => (
              <path key={d} d={d} stroke={C.water} strokeWidth={w} strokeLinejoin="round" />
            ))}
            {(t.runway || []).map(([color, w, d]) => (
              <path key={d} d={d} stroke={color} strokeWidth={w} />
            ))}
            {t.preserve && <path d={t.preserve} stroke="#add19e" strokeWidth="8" />}
            {(t.bounds || []).map((d) => (
              <path key={d} d={d} stroke="#b9a3bd" strokeWidth="4" strokeDasharray="14 5 4 5" />
            ))}
            {(t.admin || []).map((d) => (
              <path key={d} d={d} stroke="#dcc392" strokeWidth="3" strokeDasharray="14 6" />
            ))}
          </g>
        )}
      </TileLayer>

      <Roads kind="res" />
      <Roads kind="tert" />
      <TileLayer>
        {(t) => (
          <g fill="none">
            {(t.dots || []).map((d) => (
              <path key={d} d={d} stroke="#3a3af0" strokeWidth="3" strokeDasharray="4 6" />
            ))}
            {(t.thinrail || []).map((d) => (
              <path key={d} d={d} stroke="#a3a3a3" strokeWidth="6" />
            ))}
          </g>
        )}
      </TileLayer>
      <Roads kind="sec" />
      <Roads kind="prim" />
      <Roads kind="trunk" />
      <Roads kind="motor" />
      <TileLayer>
        {(t) => (
          <g fill="none">
            {(t.rail || []).map((d) => (
              <g key={d}>
                <path d={d} stroke="#707070" strokeWidth="9" />
                <path d={d} stroke="#e8e8e8" strokeWidth="3" strokeDasharray="24 24" />
              </g>
            ))}
            {t.loop && <path d={t.loop} stroke="#606060" strokeWidth="6" />}
          </g>
        )}
      </TileLayer>

      <path d="M967,552v5l6,4v1.5l-6,-2v3l2,2h-4l2,-2v-3l-6,2v-1.5l6,-4v-5z" fill="#8461c4" stroke="#8461c4" />

      {LABELS.map((label, i) => <MapLabel key={i} label={label} />)}
      <path id="sagamore" d="M933,139Q960,135 978,149Q990,164 1006,196" fill="none" />
      <text fontSize="8" fill="#222">
        <textPath href="#sagamore">Sagamore Parkway West</textPath>
      </text>
      {SHIELDS.map((s) => (
        <g key={`${s.x}`}>
          <rect x={s.x} y={s.y} width={s.w} height={s.h} rx="2" fill={s.bg} stroke={s.line} />
          {s.text.map((line, i) => (
            <text key={line} x={s.x + s.w / 2} y={s.y + 13 + i * 12} textAnchor="middle" fontSize="10" fill={s.ink}>{line}</text>
          ))}
        </g>
      ))}
      {MARKERS.map(([kind, x, y], i) => {
        const m = MARKER_STYLE[kind];
        return (
          <circle key={i} cx={x} cy={y} r={m.r} fill={m.fill} fillOpacity={m.o}
            stroke={m.w ? "#000" : "none"} strokeWidth={m.w} />
        );
      })}
    </MapDrawing>
  );
}

/* ---------- charts ---------- */

const X_TICKS = [5, 5, 5, 6, 6, 6, 6, 6, 6, 6, 6, 6, 6, 7, 7, 7, 7, 7, 7, 7];
const Y_TICKS = ["1.0", "0.8", "0.6", "0.4", "0.2", "0"];

function RevenueChart() {
  const left = 53, right = 649, top = 10, bottom = 149;
  const xAt = (i) => left + ((right - left) * i) / (X_TICKS.length - 1);
  const yAt = (i) => top + ((bottom - top) * i) / (Y_TICKS.length - 1);
  return (
    <ChartSvg viewBox="0 0 657 200" role="img" aria-label="Revenue over time">
      <g stroke="#000" strokeOpacity="0.12">
        {X_TICKS.map((_, i) => (
          <line key={i} x1={Math.round(xAt(i)) + 0.5} x2={Math.round(xAt(i)) + 0.5} y1={top} y2={bottom + 8} />
        ))}
        {Y_TICKS.map((_, i) => (
          <line key={i} x1={left - 8} x2={right} y1={Math.round(yAt(i)) + 0.5} y2={Math.round(yAt(i)) + 0.5} />
        ))}
        <line x1={left + 0.5} x2={left + 0.5} y1={top} y2={bottom} />
      </g>
      {Y_TICKS.map((label, i) => (
        <text key={label} x={left - 11} y={yAt(i) + 4} textAnchor="end">{label}</text>
      ))}
      {X_TICKS.map((label, i) => (
        <text key={i} x={xAt(i)} y="171" textAnchor="middle">{label}</text>
      ))}
      <text x={(left + right) / 2} y="192" textAnchor="middle">Time (s)</text>
      <text x="15" y="80" textAnchor="middle" transform="rotate(-90 15 80)">Revenue ($)</text>
      <line x1={left} x2={right} y1={bottom} y2={bottom} stroke="#28a745" strokeWidth="2" />
      {X_TICKS.map((_, i) => (
        <circle key={i} cx={xAt(i)} cy={bottom} r="3" fill="#28a745" fillOpacity="0.2" stroke="#28a745" strokeWidth="2" />
      ))}
    </ChartSvg>
  );
}

const BATTERY = [
  { label: "Good (>60%)", share: 0.1, color: "#28a745", x: 134 },
  { label: "Medium (30-60%)", share: 0.4, color: "#ffc107", x: 262 },
  { label: "Low (<30%)", share: 0.5, color: "#dc3545", x: 413 },
];

function BatteryChart() {
  const cx = 328, cy = 84, outer = 83, inner = 41;
  const point = (r, turn) => [cx + r * Math.sin(turn * 2 * Math.PI), cy - r * Math.cos(turn * 2 * Math.PI)].join(",");
  let start = 0;
  return (
    <ChartSvg viewBox="0 0 657 200" role="img" aria-label="Battery levels">
      {BATTERY.map(({ label, share, color, x }) => {
        const from = start;
        start += share;
        return (
          <g key={label}>
            <path stroke="#fff" strokeWidth="2" fill={color}
              d={`M${point(outer, from)}A${outer},${outer} 0 0 1 ${point(outer, start)}L${point(inner, start)}A${inner},${inner} 0 0 0 ${point(inner, from)}Z`} />
            <rect x={x} y="179" width="38" height="10" fill={color} />
            <text x={x + 45} y="187">{label}</text>
          </g>
        );
      })}
    </ChartSvg>
  );
}

/* ---------- page ---------- */

const NAV = [
  [FaCar, "Vehicle Tracking"],
  [FaClipboardList, "Order Tracking"],
  [FaChargingStation, "Charging Stations"],
  [FaGear, "Configuration"],
];

const STATS = [
  ["Time", "7.2s", "#0d6efd"],
  ["Revenue", "$0.00", "#198754"],
  ["Orders", "0", "#0dcaf0"],
  ["Vehicle Util.", "90%", "#ffc107"],
  ["Charging Util.", "0%", "#6c757d"],
];

export default function App() {
  const [speed, setSpeed] = useState(1);
  return (
    <Viewport>
      <GlobalStyle />
      <Page>
        <Navbar>
          <Brand href="#">EV Simulation Dashboard</Brand>
          <Nav>
            {NAV.map(([Icon, label]) => (
              <NavLink key={label} href="#"><Icon />{label}</NavLink>
            ))}
          </Nav>
          <Status><StatusDot />Connecting... Connected</Status>
        </Navbar>

        <Main>
          <Sidebar>
            <Card>
              <CardHeader><CardTitle><FaSliders />Simulation Control</CardTitle></CardHeader>
              <ControlBody>
                <Field>
                  <label htmlFor="location">Location</label>
                  <TextInput id="location" defaultValue="West Lafayette, Indiana, USA" />
                </Field>
                <Columns>
                  <Field>
                    <label htmlFor="vehicles">Vehicles</label>
                    <TextInput id="vehicles" inputMode="numeric" defaultValue="10" />
                  </Field>
                  <Field>
                    <label htmlFor="duration">Duration (s)</label>
                    <TextInput id="duration" inputMode="numeric" defaultValue="300" />
                  </Field>
                </Columns>
                <ButtonStack>
                  <ActionButton $bg="#198754" disabled><FaPlus />Create Simulation</ActionButton>
                  <ActionButton $bg="#0d6efd"><FaRotateRight />Restart</ActionButton>
                  <ActionButton $bg="#ffc107" $fg="#000"><FaPlay />Resume</ActionButton>
                  <ActionButton $bg="#dc3545"><FaStop />Stop</ActionButton>
                </ButtonStack>
                <Field $last>
                  <label htmlFor="speed">Speed: {speed.toFixed(1)}x</label>
                  <Range id="speed" type="range" min="0.1" max="5" step="0.1" value={speed}
                    onChange={(e) => setSpeed(Number(e.target.value))} />
                </Field>
              </ControlBody>
            </Card>

            <Card>
              <CardHeader><CardTitle><FaChartBar />Live Statistics</CardTitle></CardHeader>
              <CardBody>
                <Columns $rowGap={8}>
                  {STATS.map(([label, value, color], i) => (
                    <Tile key={label} $bg={color} $wide={i === 0}>
                      <TileLabel>{label}</TileLabel>
                      <TileValue>{value}</TileValue>
                    </Tile>
                  ))}
                </Columns>
              </CardBody>
            </Card>
          </Sidebar>

          <Content>
            <Card>
              <CardHeader>
                <CardTitle><FaMap />Real-time Map</CardTitle>
                <CenterButton><FaCrosshairs />Center</CenterButton>
              </CardHeader>
              <MapFrame>
                <CityMap />
                <ZoomControl>
                  <ZoomButton aria-label="Zoom in">+</ZoomButton>
                  <ZoomButton aria-label="Zoom out">−</ZoomButton>
                </ZoomControl>
                <Attribution>
                  <svg width="12" height="8" aria-hidden="true">
                    <path fill="#4c7be1" d="M0 0h12v4H0z" />
                    <path fill="#ffd500" d="M0 4h12v4H0z" />
                  </svg>
                  <a href="#">Leaflet</a>
                  <span>| © OpenStreetMap contributors</span>
                </Attribution>
              </MapFrame>
            </Card>

            <Charts>
              <Card>
                <CardHeader><CardTitle $small><FaChartLine />Revenue Over Time</CardTitle></CardHeader>
                <CardBody><RevenueChart /></CardBody>
              </Card>
              <Card>
                <CardHeader><CardTitle $small><FaBatteryHalf />Battery Levels</CardTitle></CardHeader>
                <CardBody><BatteryChart /></CardBody>
              </Card>
            </Charts>
          </Content>
        </Main>
      </Page>
    </Viewport>
  );
}
